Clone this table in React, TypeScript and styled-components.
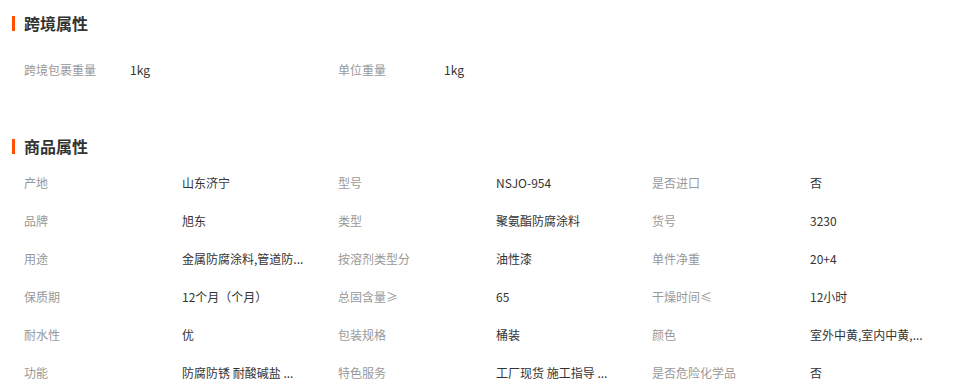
import React, { FC } from 'react'
import styled, { createGlobalStyle } from 'styled-components'

interface attr {
  name: string,
  value: string,
}

const crossBorder: attr[] = [
  { name: '跨境包裹重量', value: '1kg' },
  { name: '单位重量', value: '1kg' },
]

const productAttrs: attr[] = [
  { name: '产地', value: '山东济宁' },
  { name: '型号', value: 'NSJO-954' },
  { name: '是否进口', value: '否' },
  { name: '品牌', value: '旭东' },
  { name: '类型', value: '聚氨酯防腐涂料' },
  { name: '货号', value: '3230' },
  { name: '用途', value: '金属防腐涂料,管道防...' },
  { name: '按溶剂类型分', value: '油性漆' },
  { name: '单件净重', value: '20+4' },
  { name: '保质期', value: '12个月（个月）' },
  { name: '总固含量≥', value: '65' },
  { name: '干燥时间≤', value: '12小时' },
  { name: '耐水性', value: '优' },
  { name: '包装规格', value: '桶装' },
  { name: '颜色', value: '室外中黄,室内中黄,...' },
  { name: '功能', value: '防腐防锈 耐酸碱盐 ...' },
  { name: '特色服务', value: '工厂现货 施工指导 ...' },
  { name: '是否危险化学品', value: '否' },
]

const App: FC = () => {
  return (
    <Page>
      <GlobalStyle />
      <Title>跨境属性</Title>
      <CrossGrid>
        {crossBorder.map(item => (
          <Cell key={item.name} labelWidth={106}>
            <Label>{item.name}</Label>
            <Value>{item.value}</Value>
          </Cell>
        ))}
      </CrossGrid>
      <Title spaced>商品属性</Title>
      <AttrGrid>
        {productAttrs.map(item => (
          <Cell key={item.name} labelWidth={158}>
            <Label>{item.name}</Label>
            <Value>{item.value}</Value>
          </Cell>
        ))}
      </AttrGrid>
    </Page>
  )
}

const GlobalStyle = createGlobalStyle`
  body {
    margin: 0;
    background: #fff;
    font-family: "Microsoft YaHei", "Noto Sans CJK SC", "Noto Sans", sans-serif;
  }
`
const Page = styled.div`
  width: 959px;
  height: 392px;
  overflow: hidden;
  padding: 13px 0 0 12px;
  box-sizing: border-box;
`
const Title = styled.h3<{ spaced?: boolean }>`
  margin: ${p => (p.spaced ? '48px' : '0')} 0 0;
  height: 20px;
  display: flex;
  align-items: center;
  gap: 9px;
  font-size: 16px;
  font-weight: bold;
  color: #333;
  line-height: 20px;
  &::before {
    content: '';
    width: 3px;
    height: 15px;
    background: #ff5000;
  }
`
const CrossGrid = styled.div`
  margin-top: 17px;
  padding-left: 12px;
  display: grid;
  grid-template-columns: repeat(2, 314px);
`
const AttrGrid = styled.div`
  margin-top: 7px;
  padding-left: 12px;
  display: grid;
  grid-template-columns: repeat(3, 314px);
`
const Cell = styled.div<{ labelWidth: number }>`
  height: 38px;
  display: grid;
  grid-template-columns: ${p => p.labelWidth}px 1fr;
  align-items: center;
  font-size: 12px;
`
const Label = styled.span`
  color: #999;
  white-space: nowrap;
`
const Value = styled.span`
  color: #333;
  white-space: nowrap;
`

export default App
